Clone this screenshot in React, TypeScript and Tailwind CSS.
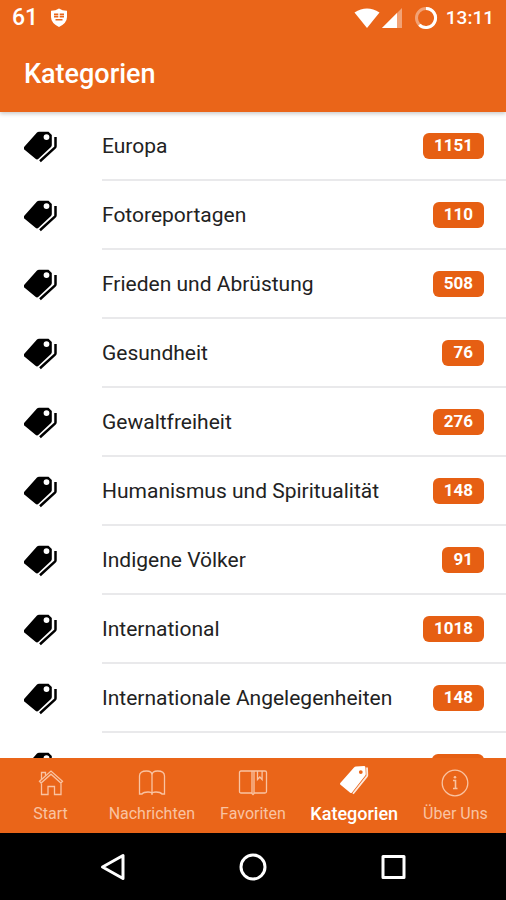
import type { ReactNode } from 'react';
import clsx from 'clsx';

interface Category {
  id: number;
  name?: string;
  count?: number;
}

const categories: Category[] = [
  { id: 1, name: 'Europa', count: 1151 },
  { id: 2, name: 'Fotoreportagen', count: 110 },
  { id: 3, name: 'Frieden und Abrüstung', count: 508 },
  { id: 4, name: 'Gesundheit', count: 76 },
  { id: 5, name: 'Gewaltfreiheit', count: 276 },
  { id: 6, name: 'Humanismus und Spiritualität', count: 148 },
  { id: 7, name: 'Indigene Völker', count: 91 },
  { id: 8, name: 'International', count: 1018 },
  { id: 9, name: 'Internationale Angelegenheiten', count: 148 },
  // not loaded yet
  { id: 10 },
];

function TagsIcon() {
  return (
    <svg width="34" height="32" viewBox="0 0 34 32" className="shrink-0" aria-hidden="true">
      <path
        fillRule="evenodd"
        d="M15 .8h9.500L27.800 4V14q0 1.200-.8 2L14.500 27.700q-1.500 1.400-3 0L.3 18.500q-1.500-1.400 0-2.800L13 1.600q.8-.8 2-.8zM22.500 3.200a2.900 2.900 0 1 0 0 5.800 2.900 2.900 0 0 0 0-5.800z"
      />
      <path d="M31.500 6v9.300q0 .8-.6 1.400L16 30.200" fill="none" stroke="#000" strokeWidth="2.500" />
    </svg>
  );
}

function StatusBar() {
  return (
    <div className="flex h-9 items-center justify-between px-3 text-white">
      <div className="flex items-center gap-3">
        <span className="text-[23px] font-medium leading-9">61</span>
        <svg width="18" height="20" viewBox="0 0 18 20" aria-hidden="true">
          <path d="M9 .5q3.500 2.300 8 2.200v6.300q0 6-8 10-8-4-8-10V2.700Q5.500 2.800 9 .5z" fill="#fff" />
          <path d="M4 5.500h4.300v4H4zM9.700 5.500H14v4H9.700zM5.500 11h7v1.500h-7z" fill="#ea6519" />
          <path d="M4 7.500h10" stroke="#fff" strokeWidth=".6" />
        </svg>
      </div>
      <div className="flex items-center">
        <svg width="26" height="20" viewBox="0 0 26 20" aria-hidden="true">
          <path d="M.5 4.500Q13-3.500 25.500 4.500L13 20z" fill="#fff" />
        </svg>
        <svg width="20" height="20" viewBox="0 0 20 20" className="ml-0.5" aria-hidden="true">
          <path d="M20 0v20H0z" fill="#fff" fillOpacity=".4" />
          <path d="M15 5v15H0z" fill="#fff" />
        </svg>
        <svg width="24" height="24" viewBox="0 0 24 24" className="ml-3" fill="none" aria-hidden="true">
          <circle cx="12" cy="12" r="9.500" stroke="#fff" strokeOpacity=".4" strokeWidth="3" />
          <path d="M12 2.500a9.500 9.500 0 1 1-6.700 16.200" stroke="#fff" strokeWidth="3" />
        </svg>
        <span className="ml-2 text-[19px] font-medium leading-9">13:11</span>
      </div>
    </div>
  );
}

function CategoryRow({ name, count }: Category) {
  return (
    <li>
      <button type="button" className="flex h-[69px] w-full items-center gap-11 pl-6 text-left">
        <TagsIcon />
        <span className="flex h-full min-w-0 flex-1 items-center justify-between border-b-2 border-[#e9e9eb] pr-[22px]">
          <span className="truncate text-[21px] leading-7 text-[#222]">{name}</span>
          <span
            className={clsx(
              'h-[26px] rounded-md bg-[#e65f13] px-[11px] text-center text-[17px] font-bold leading-6 text-white',
              count === undefined && 'w-[52px]'
            )}
          >
            {count}
          </span>
        </span>
      </button>
    </li>
  );
}

interface TabProps {
  label: string;
  active?: boolean;
  children: ReactNode;
}

function Tab({ label, active = false, children }: TabProps) {
  return (
    <button
      type="button"
      aria-current={active ? 'page' : undefined}
      className={clsx(
        'flex min-w-0 flex-1 flex-col items-center justify-between whitespace-nowrap pb-[7px]',
        active ? 'pt-1.5 text-white' : 'pt-[11px] text-[#f9c3a2]'
      )}
    >
      {children}
      <span className={active ? 'text-lg font-medium leading-6' : 'text-base leading-6'}>{label}</span>
    </button>
  );
}

const outline = {
  fill: 'none',
  stroke: 'currentColor',
  strokeWidth: 1.3,
  'aria-hidden': true,
} as const;

function TabBar() {
  return (
    <nav className="flex h-[75px] shrink-0 bg-[#ea6519]">
      <Tab label="Start">
        <svg width="28" height="28" viewBox="0 0 28 28" {...outline}>
          <path d="M4.500 14.500V25.500h6.500v-8h6.500v8h6.500V14.500" />
          <path d="M2.500 12.300 14 2 25.500 12.300l-1.600 1.700L14 5.200 4.100 14z" />
          <path d="M4.500 10.500V3.500h4v3.300" />
        </svg>
      </Tab>
      <Tab label="Nachrichten">
        <svg width="28" height="28" viewBox="0 0 28 28" {...outline}>
          <path d="M14 25q0-2-4-2-4.500 0-6 2H1.500V7q0-5 7-5Q14 2 14 6q0-4 5.500-4 7 0 7 5v18H24q-1.500-2-6-2-4 0-4 2zM14 6v20" />
        </svg>
      </Tab>
      <Tab label="Favoriten">
        <svg width="30" height="28" viewBox="0 0 30 28" {...outline}>
          <path d="M3 2h24q1.500 0 1.500 1.500v19q0 1.500-1.500 1.500H16.500L15 25.500 13.500 24H3q-1.500 0-1.500-1.500v-19Q1.500 2 3 2z" />
          <path d="M14 2v22M16 2v22M19.500 2v8.500l2.300-2.500 2.300 2.500V2" />
        </svg>
      </Tab>
      <Tab label="Kategorien" active>
        <svg width="32" height="32" viewBox="0 0 32 32" aria-hidden="true">
          <path
            fillRule="evenodd"
            fill="currentColor"
            d="M18 2.500 26 2q1.300 0 1.400 1.300L27.800 10q0 1-.7 1.800L14 28.500q-.8 1-1.800.2L2.500 20.800q-1-.8-.2-1.800L16 3.500q.8-1 2-1zM22.800 6.200a1.900 1.900 0 1 0 0 3.800 1.900 1.900 0 0 0 0-3.800z"
          />
          <path d="m29 3.500.3 7.700q0 .8-.6 1.500L15 29.700" fill="none" stroke="currentColor" strokeWidth="1.800" strokeOpacity=".85" />
        </svg>
      </Tab>
      <Tab label="Über Uns">
        <svg width="28" height="28" viewBox="0 0 28 28" {...outline}>
          <circle cx="14" cy="14" r="12.800" />
          <path d="M12 11.500h2.500v7.800M12 19.500h4.500" strokeWidth="1.600" />
          <circle cx="14" cy="8.300" r="1.300" fill="currentColor" stroke="none" />
        </svg>
      </Tab>
    </nav>
  );
}

function SystemNav() {
  return (
    <div className="flex h-[67px] shrink-0 items-center justify-center gap-28 bg-black text-white">
      <button type="button" aria-label="Zurück">
        <svg width="28" height="28" viewBox="0 0 28 28" fill="none" stroke="currentColor" strokeWidth="3" strokeLinejoin="round" aria-hidden="true">
          <path d="M24 2.500v23L3.500 14z" />
        </svg>
      </button>
      <button type="button" aria-label="Startbildschirm">
        <svg width="28" height="28" viewBox="0 0 28 28" fill="none" stroke="currentColor" strokeWidth="3" aria-hidden="true">
          <circle cx="14" cy="14" r="12" />
        </svg>
      </button>
      <button type="button" aria-label="Übersicht">
        <svg width="28" height="28" viewBox="0 0 28 28" fill="none" stroke="currentColor" strokeWidth="3" strokeLinejoin="round" aria-hidden="true">
          <path d="M4 3.500h21v21H4z" />
        </svg>
      </button>
    </div>
  );
}

export default function App() {
  return (
    <div className="flex h-screen flex-col bg-white font-[Roboto,sans-serif]">
      <header className="relative z-10 shrink-0 bg-[#ea6519] shadow-[0_2px_4px_rgba(0,0,0,0.2)]">
        <StatusBar />
        <h1 className="px-6 text-[27px] font-medium leading-[76px] text-white">Kategorien</h1>
      </header>
      <main className="min-h-0 flex-1 overflow-hidden">
        <ul>
          {categories.map((category) => (
            <CategoryRow key={category.id} {...category} />
          ))}
        </ul>
      </main>
      <TabBar />
      <SystemNav />
    </div>
  );
}
